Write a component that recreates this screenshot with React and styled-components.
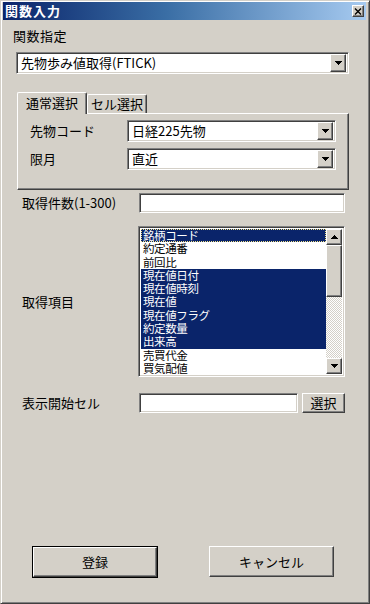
import React from 'react';
import styled, { createGlobalStyle, css } from 'styled-components';

const GlobalStyle = createGlobalStyle`
  html, body {
    margin: 0;
    padding: 0;
    background: #d4d0c8;
  }
  body {
    font-family: "Noto Sans CJK JP", "Noto Sans", sans-serif;
    font-size: 13px;
    color: #000;
  }
  * {
    box-sizing: border-box;
  }
`;

const sunken = css`
  border: 1px solid;
  border-color: #808080 #ffffff #ffffff #808080;
  box-shadow: inset 1px 1px #404040, inset -1px -1px #d4d0c8;
  background: #ffffff;
`;

const raised = css`
  border: 1px solid;
  border-color: #ffffff #404040 #404040 #ffffff;
  box-shadow: inset -1px -1px #808080, inset 1px 1px #d4d0c8;
  background: #d4d0c8;
`;

const Window = styled.div`
  width: 370px;
  height: 604px;
  display: flex;
  flex-direction: column;
  border: 1px solid;
  border-color: #d4d0c8 #404040 #404040 #d4d0c8;
  box-shadow: inset 1px 1px #ffffff, inset -1px -1px #808080;
  padding: 1px 3px 3px 2px;
`;

const TitleBar = styled.div`
  height: 18px;
  display: flex;
  align-items: center;
  justify-content: space-between;
  padding: 0 2px 0 2px;
  background: linear-gradient(to right, #0a246a 0%, #3a6ea5 45%, #a6caf0 100%);
`;

const TitleText = styled.span`
  color: #ffffff;
  font-weight: bold;
  font-size: 13px;
  line-height: 18px;
  letter-spacing: 1px;
`;

const CloseButton = styled.div`
  ${raised};
  width: 12px;
  height: 12px;
  display: flex;
  align-items: center;
  justify-content: center;
`;

const Body = styled.div`
  flex: 1;
  display: flex;
  flex-direction: column;
`;

const Label = styled.div`
  line-height: 16px;
  white-space: nowrap;
`;

const FuncLabel = styled(Label)`
  margin: 8px 0 0 10px;
  letter-spacing: 0.5px;
`;

const ComboBox = styled.div`
  ${sunken};
  width: ${p => p.$width}px;
  height: 22px;
  display: flex;
  align-items: center;
  padding: 2px;
`;

const ComboText = styled.div`
  flex: 1;
  padding-left: 2px;
  line-height: 18px;
  white-space: nowrap;
  overflow: hidden;
`;

const ArrowButton = styled.div`
  ${raised};
  width: 16px;
  height: ${p => p.$height || 18}px;
  flex: none;
  display: flex;
  align-items: center;
  justify-content: center;
`;

const MainCombo = styled.div`
  margin: 8px 0 0 13px;
`;

const TabArea = styled.div`
  margin: 18px 0 0 14px;
  width: 332px;
`;

const TabStrip = styled.div`
  height: 21px;
  display: flex;
  align-items: flex-end;
`;

const Tab = styled.div`
  border: 1px solid;
  border-bottom: none;
  border-color: #ffffff #404040 #404040 #ffffff;
  box-shadow: inset -1px 0 #808080;
  border-radius: 2px 2px 0 0;
  background: #d4d0c8;
  width: ${p => p.$width}px;
  height: ${p => (p.$active ? 22 : 19)}px;
  margin-bottom: ${p => (p.$active ? -1 : 0)}px;
  position: relative;
  z-index: ${p => (p.$active ? 1 : 0)};
  text-align: center;
  line-height: ${p => (p.$active ? 19 : 18)}px;
  white-space: nowrap;
`;

const TabPanel = styled.div`
  ${raised};
  height: 77px;
  padding: 6px 0 0 12px;
  display: flex;
  flex-direction: column;
  gap: 6px;
`;

const PanelRow = styled.div`
  display: grid;
  grid-template-columns: 97px 209px;
  align-items: center;
`;

const FieldRow = styled.div`
  margin: ${p => p.$top}px 0 0 19px;
  display: grid;
  grid-template-columns: 117px auto;
  align-items: center;
`;

const TextInput = styled.div`
  ${sunken};
  width: ${p => p.$width}px;
  height: 20px;
`;

const InlineGroup = styled.div`
  display: flex;
  gap: 4px;
`;

const SmallButton = styled.div`
  ${raised};
  width: 43px;
  height: 20px;
  text-align: center;
  line-height: 17px;
`;

const ListBox = styled.div`
  ${sunken};
  width: 207px;
  height: 151px;
  margin-left: -1px;
  padding: 2px;
  display: flex;
  overflow: hidden;
`;

const ListItems = styled.div`
  flex: 1;
  overflow: hidden;
`;

const ListItem = styled.div`
  height: 13.3px;
  line-height: 13.3px;
  font-size: 11.5px;
  letter-spacing: -0.4px;
  padding-left: 2px;
  white-space: nowrap;
  color: ${p => (p.$selected ? '#ffffff' : '#000000')};
  background: ${p => (p.$selected ? '#0a246a' : 'transparent')};
  outline: ${p => (p.$focused ? '1px dotted #f4e48a' : 'none')};
  outline-offset: -1px;
`;

const ScrollBar = styled.div`
  width: 16px;
  display: flex;
  flex-direction: column;
`;

const ScrollThumb = styled.div`
  ${raised};
  height: 52px;
`;

const ScrollTrack = styled.div`
  flex: 1;
  background-color: #ffffff;
  background-image: repeating-conic-gradient(#d4d0c8 0 25%, #ffffff 0 50%);
  background-size: 2px 2px;
`;

const ButtonRow = styled.div`
  margin: auto 0 22px 29px;
  display: flex;
  gap: 51px;
`;

const DialogButton = styled.div`
  width: ${p => p.$width}px;
  height: ${p => p.$height}px;
  display: flex;
  ${p =>
    p.$default
      ? css`
          border: 1px solid #000000;
        `
      : ''}
`;

const ButtonFace = styled.div`
  ${raised};
  flex: 1;
  display: flex;
  align-items: center;
  justify-content: center;
  padding-bottom: 1px;
`;

const Triangle = ({ up }) => (
  <svg width="7" height="4" viewBox="0 0 7 4" shapeRendering="crispEdges">
    {up ? (
      <path d="M3 0h1v1h1v1h1v1h1v1H0V3h1V2h1V1h1z" fill="#000" />
    ) : (
      <path d="M0 0h7v1H6v1H5v1H4v1H3V3H2V2H1V1H0z" fill="#000" />
    )}
  </svg>
);

const CloseGlyph = () => (
  <svg width="8" height="7" viewBox="0 0 8 7">
    <path d="M1 0.5 L7 6.5 M7 0.5 L1 6.5" stroke="#000" strokeWidth="1.4" />
  </svg>
);

const Combo = ({ width, value }) => (
  <ComboBox $width={width}>
    <ComboText>{value}</ComboText>
    <ArrowButton>
      <Triangle />
    </ArrowButton>
  </ComboBox>
);

const items = [
  { text: '銘柄コード', selected: true, focused: true },
  { text: '約定通番' },
  { text: '前回比' },
  { text: '現在値日付', selected: true },
  { text: '現在値時刻', selected: true },
  { text: '現在値', selected: true },
  { text: '現在値フラグ', selected: true },
  { text: '約定数量', selected: true },
  { text: '出来高', selected: true },
  { text: '売買代金' },
  { text: '買気配値' },
];

export default function App() {
  return (
    <>
      <GlobalStyle />
      <Window>
        <TitleBar>
          <TitleText>関数入力</TitleText>
          <CloseButton>
            <CloseGlyph />
          </CloseButton>
        </TitleBar>
        <Body>
          <FuncLabel>関数指定</FuncLabel>
          <MainCombo>
            <Combo width={333} value="先物歩み値取得(FTICK)" />
          </MainCombo>

          <TabArea>
            <TabStrip>
              <Tab $active $width={70}>通常選択</Tab>
              <Tab $width={60}>セル選択</Tab>
            </TabStrip>
            <TabPanel>
              <PanelRow>
                <Label>先物コード</Label>
                <Combo width={209} value="日経225先物" />
              </PanelRow>
              <PanelRow>
                <Label>限月</Label>
                <Combo width={209} value="直近" />
              </PanelRow>
            </TabPanel>
          </TabArea>

          <FieldRow $top={3}>
            <Label>取得件数(1-300)</Label>
            <TextInput $width={206} />
          </FieldRow>

          <FieldRow $top={13}>
            <Label>取得項目</Label>
            <ListBox>
              <ListItems>
                {items.map(item => (
                  <ListItem
                    key={item.text}
                    $selected={item.selected}
                    $focused={item.focused}
                  >
                    {item.text}
                  </ListItem>
                ))}
              </ListItems>
              <ScrollBar>
                <ArrowButton $height={16}>
                  <Triangle up />
                </ArrowButton>
                <ScrollThumb />
                <ScrollTrack />
                <ArrowButton $height={16}>
                  <Triangle />
                </ArrowButton>
              </ScrollBar>
            </ListBox>
          </FieldRow>

          <FieldRow $top={16}>
            <Label>表示開始セル</Label>
            <InlineGroup>
              <TextInput $width={159} />
              <SmallButton>選択</SmallButton>
            </InlineGroup>
          </FieldRow>

          <ButtonRow>
            <DialogButton $default $width={126} $height={32}>
              <ButtonFace>登録</ButtonFace>
            </DialogButton>
            <DialogButton $width={125} $height={31}>
              <ButtonFace>キャンセル</ButtonFace>
            </DialogButton>
          </ButtonRow>
        </Body>
      </Window>
    </>
  );
}
